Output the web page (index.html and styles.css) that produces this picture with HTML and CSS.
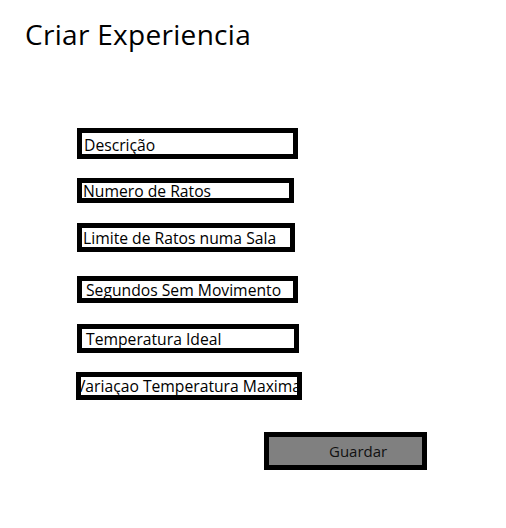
FILE: index.html
```html
<!DOCTYPE html>
<html lang="pt">
<head>
    <meta charset="UTF-8">
    <meta name="viewport" content="width=device-width, initial-scale=1.0">
    <title>Criar Experiencia</title>
    <link rel="stylesheet" href="styles.css">
</head>
<body>
    <div class="window" role="main">
        <h1 class="title">Criar Experiencia</h1>

        <form class="form" aria-label="Nova experiencia">
            <div class="field field-desc">Descrição</div>
            <div class="field field-ratos">Numero de Ratos</div>
            <div class="field field-limite">Limite de Ratos numa Sala</div>
            <div class="field field-segundos">Segundos Sem Movimento</div>
            <div class="field field-temp">Temperatura Ideal</div>
            <div class="field field-variacao"><span class="scrolled">Variaçao Temperatura Maxima</span></div>

            <button type="button" class="button">Guardar</button>
        </form>
    </div>
</body>
</html>
```

FILE: styles.css
```css
/* Global Styles */
body {
    margin: 0;
    padding: 0;
    background: #fff;
    color: #000;
    font-family: 'Open Sans', 'Noto Sans', Arial, sans-serif;
}

.window {
    width: 506px;
    height: 528px;
    overflow: hidden;
}

.title {
    margin: 0;
    padding: 15px 0 0 25px;
    font-size: 28px;
    font-weight: 400;
    letter-spacing: 0.3px;
    line-height: 38px;
}

/* Form fields */
.form {
    display: flex;
    flex-direction: column;
    align-items: flex-start;
    padding: 75px 0 0 77px;
}

.field {
    box-sizing: border-box;
    border: 5px solid #000;
    background: #fff;
    font-size: 15.7px;
    line-height: 20px;
    white-space: nowrap;
    overflow: hidden;
    display: flex;
    align-items: center;
}

.field-desc {
    width: 221px;
    height: 31px;
    padding: 2px 0 0 2px;
}

.field-ratos {
    margin-top: 19px;
    width: 217px;
    height: 25px;
    padding-left: 1px;
}

.field-limite {
    margin-top: 20px;
    width: 218px;
    height: 29px;
    padding: 1px 0 0 1px;
}

.field-segundos {
    margin-top: 24px;
    width: 221px;
    height: 27px;
    padding-left: 4px;
}

.field-temp {
    margin-top: 21px;
    width: 222px;
    height: 29px;
    padding-left: 4px;
}

.field-variacao {
    margin: 19px 0 0 -1px;
    width: 226px;
    height: 28px;
}

.field-variacao .scrolled {
    margin-left: -5px;
}

/* Save button */
.button {
    box-sizing: border-box;
    margin: 32px 0 0 187px;
    width: 163px;
    height: 38px;
    padding: 0 0 0 60px;
    border: 5px solid #000;
    background: #808080;
    color: #111;
    font-family: inherit;
    font-size: 15px;
    text-align: left;
    cursor: pointer;
}
```
